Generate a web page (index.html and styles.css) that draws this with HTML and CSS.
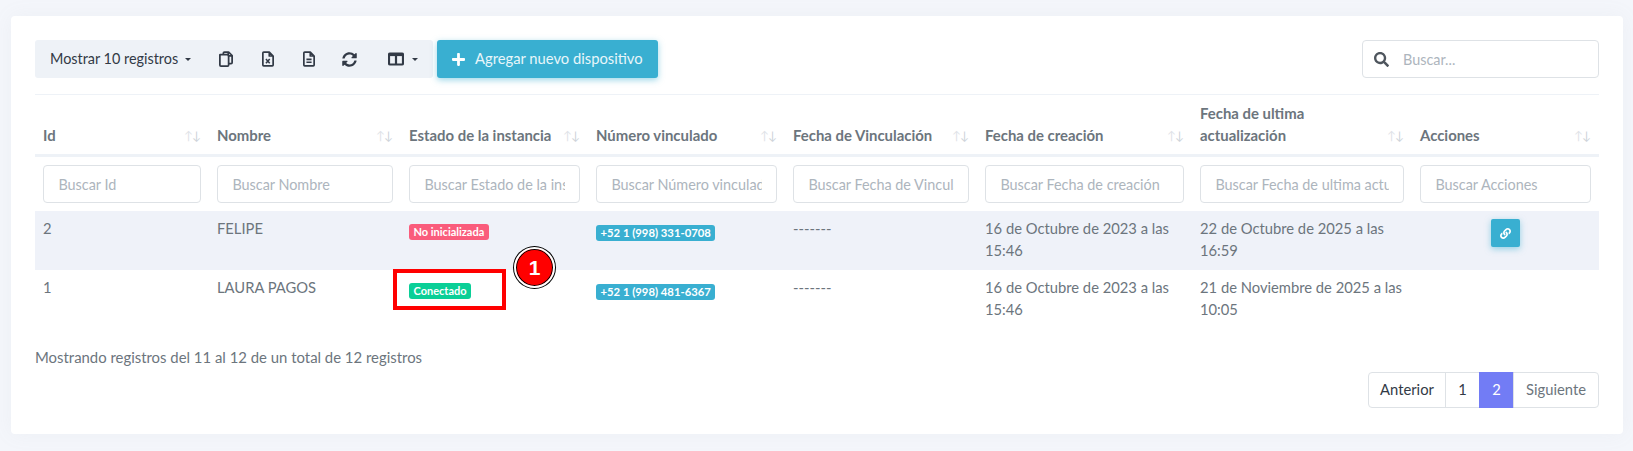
FILE: index.html
```html
<!DOCTYPE html>
<html lang="es">
<head>
<meta charset="utf-8">
<title>Dispositivos</title>
<link rel="stylesheet" href="styles.css">
</head>
<body>
<main class="card">
  <div class="top-bar">
    <div class="tools">
      <div class="tool tool-length">Mostrar 10 registros<span class="caret"></span></div>
      <div class="tool tool-copy">
        <svg class="ico" viewBox="0 0 16 18" width="14" height="16"><path class="ln" d="M5 4V2.200C5 1.500 5.500 1 6.200 1H11l4 4v8c0 .7-.5 1.200-1.200 1.200H11M10.600 1v4.400H15M1.200 4H9.800C10.500 4 11 4.500 11 5.200V15.800C11 16.500 10.500 17 9.800 17H2.200C1.500 17 1 16.500 1 15.800V4.200Z"/></svg>
      </div>
      <div class="tool tool-file">
        <svg class="ico" viewBox="0 0 14 18" width="12" height="16"><path class="ln" d="M2 1H8.500L13 5.500V16C13 16.600 12.600 17 12 17H2C1.400 17 1 16.600 1 16V2C1 1.400 1.400 1 2 1ZM8.500 1V5.500H13"/><path class="ln-thin" d="M4.600 9L9 14M9 9L4.600 14"/></svg>
      </div>
      <div class="tool tool-file">
        <svg class="ico" viewBox="0 0 14 18" width="12" height="16"><path class="ln" d="M2 1H8.500L13 5.500V16C13 16.600 12.600 17 12 17H2C1.400 17 1 16.600 1 16V2C1 1.400 1.400 1 2 1ZM8.500 1V5.500H13M4 9.500H10M4 12.800H10"/></svg>
      </div>
      <div class="tool tool-sync">
        <svg class="ico-fill" viewBox="0 0 512 512" width="15" height="15"><path d="M370.72 133.28C339.458 104.008 298.888 87.962 255.848 88c-77.458.068-144.328 53.178-162.791 126.85-1.344 5.363-6.122 9.15-11.651 9.15H24.103c-7.498 0-13.194-6.807-11.807-14.176C33.933 94.924 134.813 8 256 8c66.448 0 126.791 26.136 171.315 68.685L463.03 40.97C478.149 25.851 504 36.559 504 57.941V192c0 13.255-10.745 24-24 24H345.941c-21.382 0-32.09-25.851-16.971-40.971l41.75-41.749zM32 296h134.059c21.382 0 32.09 25.851 16.971 40.971l-41.75 41.75c31.262 29.273 71.835 45.319 114.876 45.28 77.418-.07 144.315-53.144 162.787-126.849 1.344-5.363 6.122-9.15 11.651-9.15h57.304c7.498 0 13.194 6.807 11.807 14.176C478.067 417.076 377.187 504 256 504c-66.448 0-126.791-26.136-171.315-68.685L48.97 471.03C33.851 486.149 8 475.441 8 454.059V320c0-13.255 10.745-24 24-24z"/></svg>
      </div>
      <div class="tool tool-cols">
        <svg class="ico" viewBox="0 0 16 14" width="16" height="14"><path class="ln-bold" d="M2 1.500H14C14.500 1.500 15 2 15 2.500V11.500C15 12 14.500 12.500 14 12.500H2C1.500 12.500 1 12 1 11.500V2.500C1 2 1.500 1.500 2 1.500ZM8 2V12"/><path class="ln-bold" d="M1 3H15"/></svg>
        <span class="caret caret-cols"></span>
      </div>
    </div>
    <button class="add-btn" type="button">
      <svg class="ico-white" viewBox="0 0 448 512" width="13" height="15"><path d="M416 208H272V64c0-17.670-14.330-32-32-32h-32c-17.670 0-32 14.330-32 32v144H32c-17.670 0-32 14.330-32 32v32c0 17.670 14.330 32 32 32h144v144c0 17.670 14.330 32 32 32h32c17.670 0 32-14.330 32-32V304h144c17.670 0 32-14.330 32-32v-32c0-17.670-14.330-32-32-32z"/></svg>
      <span>Agregar nuevo dispositivo</span>
    </button>
    <label class="search">
      <svg class="ico-search" viewBox="0 0 512 512" width="15" height="15"><path d="M505 442.700L405.300 343c-4.500-4.500-10.600-7-17-7H372c27.600-35.300 44-79.700 44-128C416 93.100 322.900 0 208 0S0 93.100 0 208s93.100 208 208 208c48.300 0 92.700-16.400 128-44v16.300c0 6.400 2.500 12.500 7 17l99.700 99.700c9.400 9.400 24.600 9.400 33.900 0l28.300-28.300c9.400-9.400 9.400-24.600.1-34zM208 336c-70.700 0-128-57.200-128-128 0-70.700 57.200-128 128-128 70.700 0 128 57.200 128 128 0 70.700-57.200 128-128 128z"/></svg>
      <input class="search-input" type="text" placeholder="Buscar...">
    </label>
  </div>

  <table class="grid">
    <colgroup>
      <col class="c1"><col class="c2"><col class="c3"><col class="c4"><col class="c5"><col class="c6"><col class="c7"><col class="c8">
    </colgroup>
    <thead>
      <tr class="head-row">
        <th><div class="th-in"><span>Id</span><span class="sort"><i>↑</i>↓</span></div></th>
        <th><div class="th-in"><span>Nombre</span><span class="sort"><i>↑</i>↓</span></div></th>
        <th><div class="th-in"><span>Estado de la instancia</span><span class="sort"><i>↑</i>↓</span></div></th>
        <th><div class="th-in"><span>Número vinculado</span><span class="sort"><i>↑</i>↓</span></div></th>
        <th><div class="th-in"><span>Fecha de Vinculación</span><span class="sort"><i>↑</i>↓</span></div></th>
        <th><div class="th-in"><span>Fecha de creación</span><span class="sort"><i>↑</i>↓</span></div></th>
        <th><div class="th-in"><span>Fecha de ultima<br>actualización</span><span class="sort"><i>↑</i>↓</span></div></th>
        <th><div class="th-in"><span>Acciones</span><span class="sort"><i>↑</i>↓</span></div></th>
      </tr>
      <tr class="filter-row">
        <th><input class="filter" type="text" placeholder="Buscar Id"></th>
        <th><input class="filter" type="text" placeholder="Buscar Nombre"></th>
        <th><input class="filter" type="text" placeholder="Buscar Estado de la instancia"></th>
        <th><input class="filter" type="text" placeholder="Buscar Número vinculado"></th>
        <th><input class="filter" type="text" placeholder="Buscar Fecha de Vinculación"></th>
        <th><input class="filter" type="text" placeholder="Buscar Fecha de creación"></th>
        <th><input class="filter" type="text" placeholder="Buscar Fecha de ultima actualización"></th>
        <th><input class="filter" type="text" placeholder="Buscar Acciones"></th>
      </tr>
    </thead>
    <tbody>
      <tr class="odd">
        <td>2</td>
        <td>FELIPE</td>
        <td><span class="badge b-red">No inicializada</span></td>
        <td><span class="badge b-blue">+52 1 (998) 331-0708</span></td>
        <td>-------</td>
        <td>16 de Octubre de 2023 a las 15:46</td>
        <td>22 de Octubre de 2025 a las 16:59</td>
        <td class="actions">
          <button class="link-btn" type="button">
            <svg class="ico-white" viewBox="0 0 512 512" width="11" height="11"><path d="M326.612 185.391c59.747 59.809 58.927 155.698.36 214.590-.11.120-.24.250-.36.370l-67.200 67.200c-59.270 59.270-155.699 59.262-214.960 0-59.270-59.260-59.270-155.700 0-214.960l37.106-37.106c9.840-9.840 26.786-3.300 27.294 10.606.648 17.722 3.826 35.527 9.690 52.721 1.986 5.822.567 12.262-3.783 16.612l-13.087 13.087c-28.026 28.026-28.905 73.660-1.155 101.960 28.024 28.579 74.086 28.749 102.325.510l67.200-67.190c28.191-28.191 28.073-73.757 0-101.830-3.701-3.694-7.429-6.564-10.341-8.569a16.037 16.037 0 0 1-6.947-12.606c-.396-10.567 3.348-21.456 11.698-29.806l21.054-21.055c5.521-5.521 14.182-6.199 20.584-1.731a152.482 152.482 0 0 1 20.522 17.197zM467.547 44.449c-59.261-59.262-155.690-59.270-214.960 0l-67.200 67.200c-.120.120-.250.250-.360.370-58.566 58.892-59.387 154.781.360 214.590a152.454 152.454 0 0 0 20.521 17.196c6.402 4.468 15.064 3.789 20.584-1.731l21.054-21.055c8.350-8.350 12.094-19.239 11.698-29.806a16.037 16.037 0 0 0-6.947-12.606c-2.912-2.005-6.640-4.875-10.341-8.569-28.073-28.073-28.191-73.639 0-101.830l67.200-67.190c28.239-28.239 74.300-28.069 102.325.510 27.750 28.300 26.872 73.934-1.155 101.960l-13.087 13.087c-4.350 4.350-5.769 10.790-3.783 16.612 5.864 17.194 9.042 34.999 9.690 52.721.509 13.906 17.454 20.446 27.294 10.606l37.106-37.106c59.271-59.259 59.271-155.699.001-214.959z"/></svg>
          </button>
        </td>
      </tr>
      <tr>
        <td>1</td>
        <td>LAURA PAGOS</td>
        <td><span class="badge b-green">Conectado</span></td>
        <td><span class="badge b-blue">+52 1 (998) 481-6367</span></td>
        <td>-------</td>
        <td>16 de Octubre de 2023 a las 15:46</td>
        <td>21 de Noviembre de 2025 a las 10:05</td>
        <td class="actions"></td>
      </tr>
    </tbody>
  </table>

  <p class="info">Mostrando registros del 11 al 12 de un total de 12 registros</p>
  <nav class="pager">
    <a class="pg pg-first">Anterior</a>
    <a class="pg pg-num">1</a>
    <a class="pg pg-active">2</a>
    <a class="pg pg-last">Siguiente</a>
  </nav>
</main>
<div class="mark-box"></div>
<div class="mark-dot">1</div>
</body>
</html>
```
FILE: styles.css
```css
* { box-sizing: border-box; }
html, body { height: 100%; }
body {
  margin: 0;
  padding: 16px 10px 17px 11px;
  background: #f4f6fb;
  font-family: Lato, "Noto Sans", sans-serif;
  font-size: 14.75px;
  line-height: 21.6px;
  color: #6c757d;
  overflow: hidden;
}
.card {
  background: #fff;
  border-radius: 4px;
  height: 418px;
  padding: 24px;
  box-shadow: 0 0 20px rgba(154,161,171,.08);
}
.top-bar { display: flex; align-items: stretch; height: 38px; }
.tools {
  display: flex;
  align-items: center;
  width: 398px;
  background: #eef2f7;
  border-radius: 3px;
  color: #323a46;
}
.tool { display: flex; align-items: center; justify-content: center; height: 100%; }
.tool-length { width: 170px; padding-left: 15px; justify-content: flex-start; white-space: nowrap; font-size: 14.4px; }
.tool-copy { width: 42px; }
.tool-file { width: 41px; }
.tool-sync { width: 41px; }
.tool-cols { width: 63px; justify-content: flex-start; padding-left: 18px; }
.caret {
  display: inline-block;
  width: 0; height: 0;
  margin-left: 7px;
  border-top: 3.5px solid #323a46;
  border-left: 3.5px solid transparent;
  border-right: 3.5px solid transparent;
}
.caret-cols { margin-left: 8px; }
.ln { fill: none; stroke: #323a46; stroke-width: 2; stroke-linejoin: round; }
.ln-thin { fill: none; stroke: #323a46; stroke-width: 1.8; }
.ln-bold { fill: none; stroke: #323a46; stroke-width: 2.2; }
.ico-fill { fill: #323a46; }
.ico-white { fill: #fff; display: block; }
.ico-search { fill: #4f565e; flex: none; }
.add-btn {
  display: flex;
  align-items: center;
  gap: 10px;
  width: 221px;
  margin-left: 4px;
  padding: 0 15px;
  border: 0;
  border-radius: 3px;
  background: #39afd1;
  color: #e8f6fa;
  font: inherit;
  white-space: nowrap;
  box-shadow: 0 2px 6px 0 rgba(57,175,209,.5);
}
.search {
  display: flex;
  align-items: center;
  gap: 14px;
  width: 237px;
  margin-left: auto;
  padding: 0 11px;
  border: 1px solid #dee2e6;
  border-radius: 4px;
  background: #fff;
}
.search-input, .filter { font-family: inherit; font-size: 14.4px; color: #6c757d; outline: 0; background: #fff; }
.search-input { border: 0; padding: 0; flex: 1; min-width: 0; }
.search-input::placeholder, .filter::placeholder { color: #adb5bd; opacity: 1; }

.grid {
  table-layout: fixed;
  border-collapse: collapse;
  width: 1564px;
  margin-top: 16px;
}
.c1 { width: 174px; } .c2 { width: 192px; } .c3 { width: 187px; } .c4 { width: 197px; }
.c5 { width: 192px; } .c6 { width: 215px; } .c7 { width: 220px; } .c8 { width: 187px; }
th, td { padding: 7px 8px 8px; text-align: left; vertical-align: top; }
.head-row th {
  border-top: 1px solid #eef2f7;
  border-bottom: 3px solid #eef2f7;
  vertical-align: bottom;
  padding: 8px;
  font-size: 14.9px;
  font-weight: 700;
  height: 61px;
}
.th-in { display: flex; justify-content: space-between; align-items: flex-end; }
.sort { color: #ced4da; font-weight: 400; font-size: 12px; margin-right: 1px; letter-spacing: -1px; }
.sort i { font-style: normal; color: #dfe3e8; }
.filter-row th { padding: 8px; height: 54px; }
.filter {
  display: block;
  width: 100%;
  height: 38px;
  padding: 0 14.4px;
  border: 1px solid #dee2e6;
  border-radius: 4px;
}
tbody tr { height: 59px; }
.odd { background: #eff2f9; }
.badge {
  display: inline-block;
  padding: 0 4.5px;
  height: 16px;
  border-radius: 3px;
  font-size: 11px;
  line-height: 15px;
  font-weight: 700;
  color: #fff;
  vertical-align: top;
  margin-top: 6px;
}
.b-red { background: #fa5c7c; }
.b-blue { background: #39afd1; font-size: 11.3px; margin-top: 7px; }
.b-green { background: #0acf97; }
.actions { text-align: center; }
.link-btn {
  display: inline-flex;
  align-items: center;
  justify-content: center;
  width: 29px;
  height: 28px;
  padding: 0;
  margin-top: 1px;
  border: 0;
  border-radius: 2px;
  background: #39afd1;
  box-shadow: 0 2px 6px 0 rgba(57,175,209,.5);
  vertical-align: top;
}
.info { margin: 18px 0 0; height: 23px; font-size: 14.9px; }
.pager { display: flex; justify-content: flex-end; margin-top: 2px; height: 36px; }
.pg {
  display: flex;
  align-items: center;
  justify-content: center;
  border: 1px solid #dee2e6;
  margin-left: -1px;
}
.pg-first { width: 78px; border-radius: 4px 0 0 4px; color: #323a46; }
.pg-num { width: 35px; color: #323a46; }
.pg-active { width: 35px; background: #727cf5; border-color: #727cf5; color: #fff; }
.pg-last { width: 86px; border-radius: 0 4px 4px 0; color: #6c757d; }

.mark-box {
  position: absolute;
  left: 393px;
  top: 269px;
  width: 113px;
  height: 41px;
  border: 4px solid #f00;
}
.mark-dot {
  position: absolute;
  left: 514px;
  top: 247px;
  width: 41px;
  height: 41px;
  border-radius: 50%;
  background: #f00;
  border: 2px solid #fff;
  box-shadow: 0 0 0 1px #000 inset, 0 0 0 1px #000;
  color: #fff;
  font: 700 21px/37px "Liberation Sans", sans-serif;
  text-align: center;
}
```
